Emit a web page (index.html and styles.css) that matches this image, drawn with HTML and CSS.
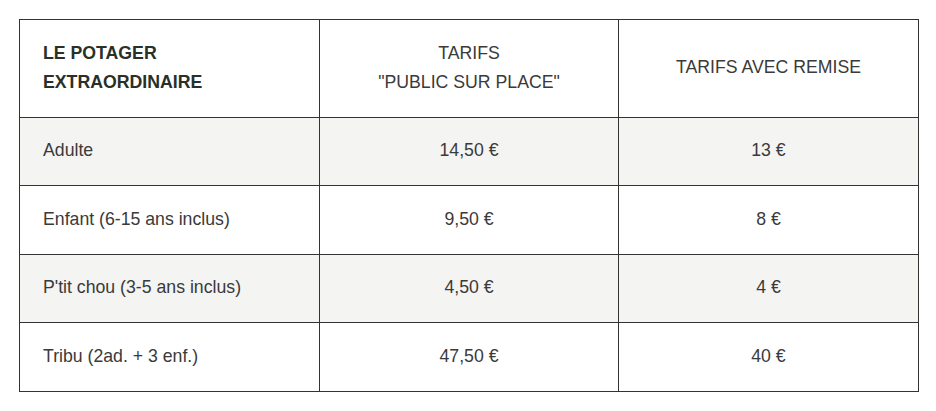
FILE: index.html
```html
<!DOCTYPE html>
<html lang="fr">
<head>
<meta charset="utf-8">
<title>Tarifs</title>
<link rel="stylesheet" href="styles.css">
</head>
<body>
<div class="wrap">
<table class="tarifs">
  <colgroup>
    <col class="c1"><col class="c2"><col class="c3">
  </colgroup>
  <thead>
    <tr>
      <th class="title">LE POTAGER<br>EXTRAORDINAIRE</th>
      <th class="head">TARIFS<br>"PUBLIC SUR PLACE"</th>
      <th class="head">TARIFS AVEC REMISE</th>
    </tr>
  </thead>
  <tbody>
    <tr class="alt"><td class="label">Adulte</td><td class="price">14,50 €</td><td class="price">13 €</td></tr>
    <tr><td class="label">Enfant (6-15 ans inclus)</td><td class="price">9,50 €</td><td class="price">8 €</td></tr>
    <tr class="alt"><td class="label">P'tit chou (3-5 ans inclus)</td><td class="price">4,50 €</td><td class="price">4 €</td></tr>
    <tr><td class="label">Tribu (2ad. + 3 enf.)</td><td class="price">47,50 €</td><td class="price">40 €</td></tr>
  </tbody>
</table>
</div>
</body>
</html>
```
FILE: styles.css
```css
html, body {
  margin: 0;
  padding: 0;
  background: #ffffff;
}
.wrap {
  padding: 19px 0 0 19px;
}
.tarifs {
  border-collapse: collapse;
  table-layout: fixed;
  width: 899px;
  font-family: "Liberation Sans", Arial, sans-serif;
  font-size: 17.7px;
  line-height: 28.6px;
  color: #3a3a3a;
}
.c1 { width: 300px; }
.c2 { width: 299px; }
.c3 { width: 300px; }
.tarifs th,
.tarifs td {
  border: 1px solid #333333;
  padding: 18.8px 23px 20.1px;
  vertical-align: middle;
}
.tarifs th {
  padding: 19px 23px 20.4px;
  font-weight: normal;
}
.tarifs th.title {
  text-align: left;
  font-weight: bold;
  color: #283028;
}
.tarifs th.head {
  text-align: center;
}
.label {
  text-align: left;
}
.price {
  text-align: center;
}
.alt td {
  background: #f4f4f3;
}
```
